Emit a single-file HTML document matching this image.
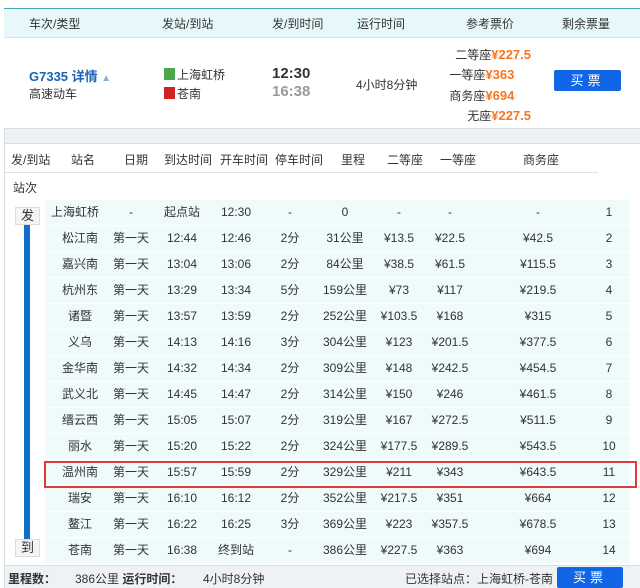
<!DOCTYPE html>
<html><head><meta charset="utf-8"><style>
*{margin:0;padding:0;box-sizing:border-box}
body{width:640px;height:588px;background:#fff;font-family:"Liberation Sans","Noto Sans CJK SC",sans-serif;font-size:12px;color:#333;position:relative;overflow:hidden}
.a{position:absolute;white-space:nowrap}
.hd{left:4px;top:8px;width:636px;height:30px;background:#e6f8fa;border-top:1px solid #4aa6b0;border-bottom:1px solid #c5e6ea}
.o{color:#f7761f;font-weight:bold;font-size:13px}
.btn{background:#1166e8;color:#fff;border-radius:2px;text-align:center;font-size:13px;letter-spacing:4px}
.row{position:absolute;left:45px;width:585px;height:25px;background:#effafb;line-height:25px}
.row span{position:absolute;top:0;text-align:center;transform:translateX(-50%)}
</style></head><body>
<div class="a hd"></div>
<div class="a" style="left:29px;top:15px">车次/类型</div>
<div class="a" style="left:162px;top:15px">发站/到站</div>
<div class="a" style="left:272px;top:15px">发/到时间</div>
<div class="a" style="left:357px;top:15px">运行时间</div>
<div class="a" style="left:466px;top:15px">参考票价</div>
<div class="a" style="left:562px;top:15px">剩余票量</div>

<div class="a" style="left:29px;top:66px;color:#1964b0;font-weight:bold;font-size:13px">G7335 详情 <span style="color:#8ab0d8;font-size:10px">▲</span></div>
<div class="a" style="left:29px;top:85px">高速动车</div>
<div class="a" style="left:164px;top:68px;width:11px;height:12px;background:#4aa84a"></div>
<div class="a" style="left:177px;top:66px">上海虹桥</div>
<div class="a" style="left:164px;top:87px;width:11px;height:12px;background:#d02222"></div>
<div class="a" style="left:177px;top:85px">苍南</div>
<div class="a" style="left:272px;top:65px;font-size:15px;font-weight:bold">12:30</div>
<div class="a" style="left:272px;top:83px;font-size:15px;font-weight:bold;color:#999">16:38</div>
<div class="a" style="left:356px;top:76px">4小时8分钟</div>
<div class="a" style="left:368px;top:45px;text-align:right;width:163px;line-height:19.3px;font-size:12px">二等座<span class="o">¥227.5</span><br>一等座<span class="o">¥363</span>&nbsp;&nbsp;&nbsp;&nbsp;&nbsp;<br>商务座<span class="o">¥694</span>&nbsp;&nbsp;&nbsp;&nbsp;&nbsp;<br>无座<span class="o">¥227.5</span></div>
<div class="a btn" style="left:554px;top:70px;width:67px;height:21px;line-height:21px">买票</div>

<div class="a" style="left:4px;top:128px;width:636px;height:16px;background:#eef1f3;border-top:1px solid #d8dde0;border-bottom:1px solid #d8dde0"></div>
<div class="a" style="left:4px;top:128px;width:1px;height:460px;background:#d8dde0"></div>
<div class="a" style="left:11px;top:151px">发/到站</div>
<div class="a" style="left:71px;top:151px">站名</div>
<div class="a" style="left:124px;top:151px">日期</div>
<div class="a" style="left:164px;top:151px">到达时间</div>
<div class="a" style="left:220px;top:151px">开车时间</div>
<div class="a" style="left:275px;top:151px">停车时间</div>
<div class="a" style="left:341px;top:151px">里程</div>
<div class="a" style="left:387px;top:151px">二等座</div>
<div class="a" style="left:440px;top:151px">一等座</div>
<div class="a" style="left:523px;top:151px">商务座</div>
<div class="a" style="left:5px;top:172px;width:593px;height:1px;background:#dde2e4"></div>
<div class="a" style="left:13px;top:179px">站次</div>

<div class="a" style="left:24px;top:224px;width:6px;height:316px;background:#0f6ec6"></div>
<div class="a" style="left:15px;top:207px;width:25px;height:18px;background:#f4f4f4;border:1px solid #ddd;text-align:center;line-height:16px;font-size:13px">发</div>
<div class="a" style="left:15px;top:539px;width:25px;height:18px;background:#f4f4f4;border:1px solid #ddd;text-align:center;line-height:16px;font-size:13px">到</div>

<div id="rows"></div>
<div class="a" style="left:44px;top:461px;width:593px;height:27px;border:2px solid #e03a3a"></div>

<div class="a" style="left:5px;top:565px;width:635px;height:23px;background:#eef2f4;border-top:1px solid #d8dde0"></div>
<div class="a" style="left:8px;top:570px;font-weight:bold">里程数：</div>
<div class="a" style="left:75px;top:570px">386公里 <b>运行时间：</b></div>
<div class="a" style="left:203px;top:570px">4小时8分钟</div>
<div class="a" style="left:405px;top:570px">已选择站点：上海虹桥-苍南</div>
<div class="a btn" style="left:557px;top:567px;width:66px;height:21px;line-height:21px">买票</div>
<script>
var d=[["上海虹桥","-","起点站","12:30","-","0","-","-","-","1"],
["松江南","第一天","12:44","12:46","2分","31公里","¥13.5","¥22.5","¥42.5","2"],
["嘉兴南","第一天","13:04","13:06","2分","84公里","¥38.5","¥61.5","¥115.5","3"],
["杭州东","第一天","13:29","13:34","5分","159公里","¥73","¥117","¥219.5","4"],
["诸暨","第一天","13:57","13:59","2分","252公里","¥103.5","¥168","¥315","5"],
["义乌","第一天","14:13","14:16","3分","304公里","¥123","¥201.5","¥377.5","6"],
["金华南","第一天","14:32","14:34","2分","309公里","¥148","¥242.5","¥454.5","7"],
["武义北","第一天","14:45","14:47","2分","314公里","¥150","¥246","¥461.5","8"],
["缙云西","第一天","15:05","15:07","2分","319公里","¥167","¥272.5","¥511.5","9"],
["丽水","第一天","15:20","15:22","2分","324公里","¥177.5","¥289.5","¥543.5","10"],
["温州南","第一天","15:57","15:59","2分","329公里","¥211","¥343","¥643.5","11"],
["瑞安","第一天","16:10","16:12","2分","352公里","¥217.5","¥351","¥664","12"],
["鳌江","第一天","16:22","16:25","3分","369公里","¥223","¥357.5","¥678.5","13"],
["苍南","第一天","16:38","终到站","-","386公里","¥227.5","¥363","¥694","14"]];
var x=[35,86,137,191,245,300,354,405,493,564],h="";
d.forEach(function(r,i){h+='<div class="row" style="top:'+(200+i*26)+'px">';
r.forEach(function(v,j){h+='<span style="left:'+(i==0&&j==0?30:x[j])+'px">'+v+'</span>'});h+='</div>'});
document.getElementById('rows').innerHTML=h;
</script>
</body></html>
